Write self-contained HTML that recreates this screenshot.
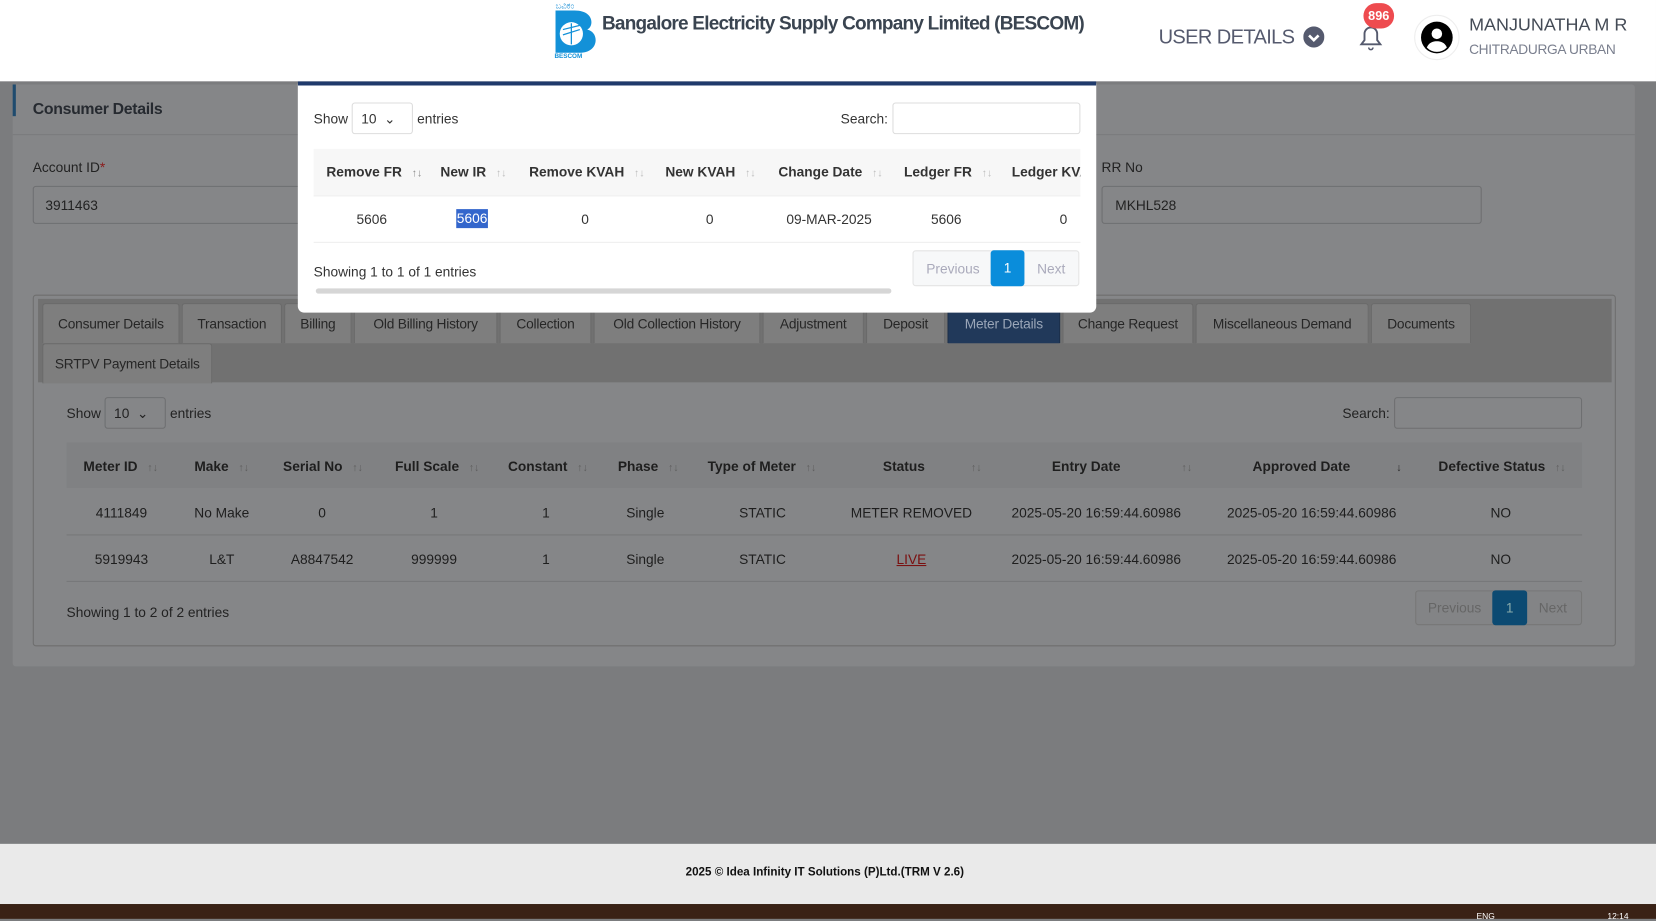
<!DOCTYPE html>
<html><head><meta charset="utf-8"><style>
*{box-sizing:border-box;margin:0;padding:0}
html,body{width:1656px;height:919px;overflow:hidden;background:#7b7c7e;font-family:"Liberation Sans",sans-serif}
#w{position:absolute;left:0;top:0;width:1568px;height:870px;transform:scale(1.05612);transform-origin:0 0;font-size:13px;color:#222}
.a{position:absolute}
.t{white-space:nowrap}
.hd{left:0;top:0;width:1568px;height:77px;background:#fff}
.card{left:12px;top:80px;width:1536px;height:551px;background:#858688;border-radius:3px}
.inp{background:#858688;border:1px solid #6e6f71;border-radius:3px;height:36px}
.tab{top:287px;height:38px;border:1px solid #6a6a6a;border-bottom:none;background:#7e7e7e;color:#262626;font-size:13px;line-height:38px;text-align:center;border-radius:3px 3px 0 0;letter-spacing:-0.2px}
.th{font-weight:bold;font-size:13px;color:#1e1e1e}
.td{font-size:13px;color:#1e1e1e;text-align:center}
.s{color:#5d5d5d;font-size:10px}
.modal{left:282px;top:77px;width:756px;height:219px;background:#fff;border-top:4px solid #1f3a6b;border-radius:0 0 6px 6px}
.m .th{color:#333}.m .td{color:#333}
</style></head><body><div id="w">
<div class="a hd"></div>
<svg class="a" style="left:524px;top:0" width="42" height="56" viewBox="0 0 42 56"><text x="2" y="8" font-size="8" fill="#1a8fd6" font-family="Noto Sans CJK SC,sans-serif">ಬವಿಕಂ</text><path d="M2 10h18c12 0 16 6 16 11 0 4-2 6-4 7 5 1 8 5 8 10 0 7-6 12-15 12H2z" fill="#1391d8"/><circle cx="17" cy="32" r="11" fill="#fff"/><path d="M17 22v20M9 28l16-4M9 33l16-5" stroke="#1391d8" stroke-width="1.2"/><text x="1" y="55" font-size="6" font-weight="bold" fill="#1391d8">BESCOM</text></svg>
<div class="a t" style="left:570px;top:12px;font-size:18px;font-weight:bold;color:#3a4450;letter-spacing:-0.75px">Bangalore Electricity Supply Company Limited (BESCOM)</div>
<div class="a t" style="left:1097px;top:25px;font-size:19px;color:#555a6e;letter-spacing:-0.6px">USER DETAILS</div>
<svg class="a" style="left:1234px;top:25px" width="20" height="20"><circle cx="10" cy="10" r="10" fill="#555a6e"/><path d="M5.5 8.5l4.5 4.5 4.5-4.5" stroke="#fff" stroke-width="2.5" fill="none"/></svg>
<svg class="a" style="left:1284px;top:20px" width="28" height="30"><path d="M5 22h18l-3-4v-6a6 6 0 0 0-12 0v6z" fill="none" stroke="#555a6e" stroke-width="1.8"/><path d="M12 25a2 2 0 0 0 4 0" fill="none" stroke="#555a6e" stroke-width="1.5"/></svg>
<div class="a t" style="left:1291px;top:3px;width:29px;height:24px;border-radius:12px;background:#ee4b4f;color:#fff;font-size:12px;font-weight:bold;text-align:center;line-height:24px">896</div>
<div class="a" style="left:1339px;top:14px;width:43px;height:43px;border-radius:50%;border:1px solid #eee;background:#fff"></div>
<svg class="a" style="left:1344px;top:19px" width="33" height="33" viewBox="0 0 33 33"><circle cx="16.5" cy="16.5" r="15" fill="#000"/><circle cx="16.5" cy="13" r="5" fill="#fff"/><path d="M7 26c2-5 6-6 9.5-6s7.5 1 9.5 6a13 13 0 0 1-19 0z" fill="#fff"/></svg>
<div class="a t" style="left:1391px;top:14px;font-size:17px;color:#444b56">MANJUNATHA M R</div>
<div class="a t" style="left:1391px;top:39px;font-size:13px;color:#7a7f8e;letter-spacing:-0.3px">CHITRADURGA URBAN</div>

<div class="a card"></div>
<div class="a" style="left:12px;top:80px;width:3px;height:30px;background:#1f4b6e"></div>
<div class="a" style="left:12px;top:127px;width:1536px;height:1px;background:#7a7b7d"></div>
<div class="a t" style="left:31px;top:95px;font-size:15px;font-weight:bold;color:#262a30;letter-spacing:-0.3px">Consumer Details</div>
<div class="a t" style="left:31px;top:151px;color:#222">Account ID<span style="color:#8b1a1a">*</span></div>
<div class="a inp" style="left:31px;top:176px;width:260px"></div>
<div class="a t" style="left:43px;top:187px">3911463</div>
<div class="a t" style="left:1043px;top:151px">RR No</div>
<div class="a inp" style="left:1043px;top:176px;width:360px"></div>
<div class="a t" style="left:1056px;top:187px">MKHL528</div>

<div class="a" style="left:31px;top:279px;width:1499px;height:333px;border:1px solid #6e6e6e;border-radius:3px"></div>
<div class="a" style="left:36px;top:283px;width:1490px;height:79px;background:#717171"></div>
<div class="a tab" style="left:40px;width:130px">Consumer Details</div>
<div class="a tab" style="left:172px;width:95px">Transaction</div>
<div class="a tab" style="left:269px;width:64px">Billing</div>
<div class="a tab" style="left:335px;width:136px">Old Billing History</div>
<div class="a tab" style="left:473px;width:87px">Collection</div>
<div class="a tab" style="left:562px;width:158px">Old Collection History</div>
<div class="a tab" style="left:722px;width:96px">Adjustment</div>
<div class="a tab" style="left:820px;width:75px">Deposit</div>
<div class="a tab" style="left:897px;width:107px;background:#21395a;color:#9aa6b8;border-color:#1a2d48">Meter Details</div>
<div class="a tab" style="left:1006px;width:124px">Change Request</div>
<div class="a tab" style="left:1132px;width:164px">Miscellaneous Demand</div>
<div class="a tab" style="left:1298px;width:95px">Documents</div>
<div class="a tab" style="left:40px;top:325px;width:161px">SRTPV Payment Details</div>

<div class="a t" style="left:63px;top:384px">Show</div>
<div class="a inp" style="left:99px;top:376px;width:58px;height:30px"></div>
<div class="a t" style="left:108px;top:384px">10 &nbsp;⌄</div>
<div class="a t" style="left:161px;top:384px">entries</div>
<div class="a t" style="left:1271px;top:384px">Search:</div>
<div class="a inp" style="left:1320px;top:376px;width:178px;height:30px"></div>
<div class="a" style="left:63px;top:419px;width:1435px;height:43px;background:#808183"></div>
<div class="a" style="left:63px;top:506px;width:1435px;height:1px;background:#767779"></div>
<div class="a" style="left:63px;top:550px;width:1435px;height:1px;background:#767779"></div>
<div class="a t th" style="left:79px;top:434px">Meter ID <span class="s">&nbsp;&nbsp;↑↓</span></div>
<div class="a t th" style="left:184px;top:434px">Make <span class="s">&nbsp;&nbsp;↑↓</span></div>
<div class="a t th" style="left:268px;top:434px">Serial No <span class="s">&nbsp;&nbsp;↑↓</span></div>
<div class="a t th" style="left:374px;top:434px">Full Scale <span class="s">&nbsp;&nbsp;↑↓</span></div>
<div class="a t th" style="left:481px;top:434px">Constant <span class="s">&nbsp;&nbsp;↑↓</span></div>
<div class="a t th" style="left:585px;top:434px">Phase <span class="s">&nbsp;&nbsp;↑↓</span></div>
<div class="a t th" style="left:670px;top:434px">Type of Meter <span class="s">&nbsp;&nbsp;↑↓</span></div>
<div class="a t th" style="left:836px;top:434px">Status <span class="s" style="margin-left:40px">↑↓</span></div>
<div class="a t th" style="left:996px;top:434px">Entry Date <span class="s" style="margin-left:54px">↑↓</span></div>
<div class="a t th" style="left:1186px;top:434px">Approved Date <span class="s" style="margin-left:40px;color:#222">↓</span></div>
<div class="a t th" style="left:1362px;top:434px">Defective Status <span class="s">&nbsp;&nbsp;↑↓</span></div>
<div class="a t td" style="left:75px;top:478px;width:80px">4111849</div>
<div class="a t td" style="left:170px;top:478px;width:80px">No Make</div>
<div class="a t td" style="left:265px;top:478px;width:80px">0</div>
<div class="a t td" style="left:371px;top:478px;width:80px">1</div>
<div class="a t td" style="left:477px;top:478px;width:80px">1</div>
<div class="a t td" style="left:571px;top:478px;width:80px">Single</div>
<div class="a t td" style="left:682px;top:478px;width:80px">STATIC</div>
<div class="a t td" style="left:803px;top:478px;width:120px">METER REMOVED</div>
<div class="a t td" style="left:948px;top:478px;width:180px">2025-05-20 16:59:44.60986</div>
<div class="a t td" style="left:1152px;top:478px;width:180px">2025-05-20 16:59:44.60986</div>
<div class="a t td" style="left:1381px;top:478px;width:80px">NO</div>
<div class="a t td" style="left:75px;top:522px;width:80px">5919943</div>
<div class="a t td" style="left:170px;top:522px;width:80px">L&amp;T</div>
<div class="a t td" style="left:265px;top:522px;width:80px">A8847542</div>
<div class="a t td" style="left:371px;top:522px;width:80px">999999</div>
<div class="a t td" style="left:477px;top:522px;width:80px">1</div>
<div class="a t td" style="left:571px;top:522px;width:80px">Single</div>
<div class="a t td" style="left:682px;top:522px;width:80px">STATIC</div>
<div class="a t td" style="left:823px;top:522px;width:80px;color:#7a1010;text-decoration:underline">LIVE</div>
<div class="a t td" style="left:948px;top:522px;width:180px">2025-05-20 16:59:44.60986</div>
<div class="a t td" style="left:1152px;top:522px;width:180px">2025-05-20 16:59:44.60986</div>
<div class="a t td" style="left:1381px;top:522px;width:80px">NO</div>
<div class="a t" style="left:63px;top:572px">Showing 1 to 2 of 2 entries</div>
<div class="a" style="left:1340px;top:559px;width:158px;height:33px;border:1px solid #777;border-radius:3px;background:#838486"></div>
<div class="a t" style="left:1352px;top:568px;color:#666">Previous</div>
<div class="a" style="left:1413px;top:559px;width:33px;height:33px;background:#0c4a72;border-radius:3px;color:#8aa;text-align:center;line-height:33px">1</div>
<div class="a t" style="left:1457px;top:568px;color:#666">Next</div>

<div class="a modal m">
<div class="a t" style="left:15px;top:24px;color:#333">Show</div>
<div class="a" style="left:51px;top:16px;width:58px;height:30px;border:1px solid #ddd;border-radius:3px"></div>
<div class="a t" style="left:60px;top:24px;color:#333">10 &nbsp;⌄</div>
<div class="a t" style="left:113px;top:24px;color:#333">entries</div>
<div class="a t" style="left:514px;top:24px;color:#333">Search:</div>
<div class="a" style="left:563px;top:16px;width:178px;height:30px;border:1px solid #ddd;border-radius:3px"></div>
<div class="a" style="left:15px;top:60px;width:726px;height:44px;background:#f7f7f7"></div>
<div class="a" style="left:15px;top:104px;width:726px;height:1px;background:#eee"></div>
<div class="a" style="left:15px;top:148px;width:726px;height:1px;background:#eee"></div>
<div class="a t th" style="left:27px;top:74px">Remove FR <span class="s" style="color:#888">&nbsp;&nbsp;↑↓</span></div>
<div class="a t th" style="left:135px;top:74px">New IR <span class="s" style="color:#bbb">&nbsp;&nbsp;↑↓</span></div>
<div class="a t th" style="left:219px;top:74px">Remove KVAH <span class="s" style="color:#bbb">&nbsp;&nbsp;↑↓</span></div>
<div class="a t th" style="left:348px;top:74px">New KVAH <span class="s" style="color:#bbb">&nbsp;&nbsp;↑↓</span></div>
<div class="a t th" style="left:455px;top:74px">Change Date <span class="s" style="color:#bbb">&nbsp;&nbsp;↑↓</span></div>
<div class="a t th" style="left:574px;top:74px">Ledger FR <span class="s" style="color:#bbb">&nbsp;&nbsp;↑↓</span></div>
<div class="a" style="left:676px;top:63px;width:65px;height:40px;overflow:hidden"><div class="a t th" style="left:0;top:11px">Ledger KVAH</div></div>
<div class="a t td" style="left:30px;top:119px;width:80px">5606</div>
<div class="a t td" style="left:150px;top:117px;width:30px;background:#3366cc;color:#fff;line-height:18px">5606</div>
<div class="a t td" style="left:232px;top:119px;width:80px">0</div>
<div class="a t td" style="left:350px;top:119px;width:80px">0</div>
<div class="a t td" style="left:448px;top:119px;width:110px">09-MAR-2025</div>
<div class="a t td" style="left:574px;top:119px;width:80px">5606</div>
<div class="a t td" style="left:685px;top:119px;width:80px">0</div>
<div class="a t" style="left:15px;top:169px;color:#333">Showing 1 to 1 of 1 entries</div>
<div class="a" style="left:17px;top:192px;width:545px;height:5px;border-radius:3px;background:#d6d6d6"></div>
<div class="a" style="left:582px;top:156px;width:158px;height:34px;border:1px solid #e4e4e4;border-radius:3px;background:#f7f8f9"></div>
<div class="a t" style="left:595px;top:166px;color:#aab">Previous</div>
<div class="a" style="left:656px;top:156px;width:32px;height:34px;background:#0a8ddb;border-radius:3px;color:#fff;text-align:center;line-height:34px">1</div>
<div class="a t" style="left:700px;top:166px;color:#aab">Next</div>
</div>

<div class="a" style="left:0;top:799px;width:1568px;height:57px;background:#eaeaea"></div>
<div class="a t" style="left:0;top:820px;width:1562px;text-align:center;font-size:11px;font-weight:bold;color:#111">2025 © Idea Infinity IT Solutions (P)Ltd.(TRM V 2.6)</div>
<div class="a" style="left:0;top:856px;width:1568px;height:14px;background:#3a2216"></div>
<div class="a t" style="left:1398px;top:863px;font-size:8px;color:#fff">ENG</div>
<div class="a t" style="left:1522px;top:863px;font-size:8px;color:#fff">12:14</div>
</div></body></html>
